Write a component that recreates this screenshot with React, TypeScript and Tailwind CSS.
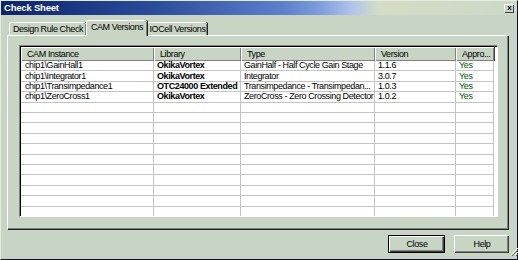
const rows: string[][] = [
  ['chip1\\GainHall1', 'OkikaVortex', 'GainHalf - Half Cycle Gain Stage', '1.1.6', 'Yes'],
  ['chip1\\Integrator1', 'OkikaVortex', 'Integrator', '3.0.7', 'Yes'],
  ['chip1\\Transimpedance1', 'OTC24000 Extended', 'Transimpedance - Transimpedan...', '1.0.3', 'Yes'],
  ['chip1\\ZeroCross1', 'OkikaVortex', 'ZeroCross - Zero Crossing Detector', '1.0.2', 'Yes'],
]

const headers = ['CAM Instance', 'Library', 'Type', 'Version', 'Appro...']

const font = { fontFamily: '"Liberation Sans", Arial, sans-serif' }

function HeaderCell({ label }: { label: string }) {
  return (
    <div className="h-[14px] flex items-center pl-[5px] bg-[#c8d4c4] border-t border-l border-white shadow-[inset_-1px_-1px_0_#808080,1px_0_0_#404040] text-black overflow-hidden whitespace-nowrap">
      {label}
    </div>
  )
}

function Tab({ label, active = false, w }: { label: string; active?: boolean; w: string }) {
  if (active) {
    return (
      <div className={`${w} h-[16px] relative z-10 -mb-px flex items-start justify-center pt-[2px] bg-[#c8d4c4] border-t border-l border-white rounded-tl-[2px] rounded-tr-[2px] shadow-[inset_-1px_0_0_#808080,1px_0_0_#202020]`}>
        {label}
      </div>
    )
  }
  return (
    <div className={`${w} h-[13px] flex items-center justify-center bg-[#c8d4c4] border-t border-l border-white rounded-tl-[2px] rounded-tr-[2px] shadow-[inset_-1px_0_0_#808080,1px_0_0_#202020]`}>
      {label}
    </div>
  )
}

function Button({ label, isDefault = false, w }: { label: string; isDefault?: boolean; w: string }) {
  return (
    <div className={`${w} h-[18px] ${isDefault ? 'border border-black' : ''}`}>
      <div className="h-full w-full flex items-center justify-center bg-[#c8d4c4] border-t border-l border-white shadow-[inset_-1px_-1px_0_#404040,inset_-2px_-2px_0_#808080] text-black">
        {label}
      </div>
    </div>
  )
}

export default function App() {
  const allRows = [...rows, ...Array.from({ length: 11 }, () => ['', '', '', '', ''])]

  return (
    <div
      className="w-[518px] h-[260px] bg-[#c8d4c4] border border-t-[#e4ece0] border-l-[#e4ece0] border-r-[#101030] border-b-[#101030] flex flex-col text-[9px] tracking-[-0.4px] text-black leading-none"
      style={font}
    >
      {/* title bar */}
      <div className="h-[14px] flex items-center justify-between pl-[3px] pr-[3px] bg-[linear-gradient(to_right,#0a246a_0%,#2c4c9c_30%,#5f80cc_55%,#7f9ede_62%,#b0c4ec_68%,#d4dcc4_73%,#ccd8c8_100%)]">
        <span className="text-white font-bold text-[9.5px] tracking-[-0.2px]">Check Sheet</span>
        <div className="w-[10px] h-[9px] flex items-center justify-center bg-[#c8d4c4] border-t border-l border-white shadow-[inset_-1px_-1px_0_#404040] text-[8px] font-bold leading-none tracking-normal pb-px">
          x
        </div>
      </div>

      {/* tabs */}
      <div className="mt-[4px] ml-[8px] h-[16px] flex items-end">
        <Tab label="Design Rule Check" w="w-[77px]" />
        <Tab label="CAM Versions" active w="w-[61px]" />
        <Tab label="IOCell Versions" w="w-[60px]" />
      </div>

      {/* tab panel */}
      <div className="ml-[6px] w-[501px] h-[194px] border-t border-l border-white shadow-[inset_-1px_-1px_0_#808080,1px_1px_0_#202020] pt-[9px] pl-[11px] pr-[9px]">
        <div className="w-[479px] h-[172px] border-t border-l border-[#808080] border-r border-b border-r-white border-b-white shadow-[inset_1px_1px_0_#000] bg-white pt-px pl-px overflow-hidden">
          <div className="grid grid-cols-[133px_87px_134px_81px_38px] w-[473px]">
            {headers.map((h) => (
              <HeaderCell key={h} label={h} />
            ))}
          </div>
          <div className="grid grid-cols-[133px_87px_134px_81px_38px] grid-rows-[repeat(15,1fr)] w-[473px] h-[156px]">
            {allRows.map((r, i) =>
              r.map((c, j) => (
                <div
                  key={`${i}-${j}`}
                  className={`flex items-center border-b border-r border-[#c4c4c4] overflow-hidden whitespace-nowrap ${
                    j === 0 ? 'pl-[4px]' : 'pl-[3px]'
                  } ${j === 1 ? 'font-bold' : ''} ${j === 4 ? 'text-[#005a00]' : 'text-black'}`}
                >
                  {c}
                </div>
              ))
            )}
          </div>
        </div>
      </div>

      {/* buttons */}
      <div className="mt-[6px] flex">
        <div className="ml-[387px]">
          <Button label="Close" isDefault w="w-[57px]" />
        </div>
        <div className="ml-[9px]">
          <Button label="Help" w="w-[55px]" />
        </div>
        <div className="flex-1 flex items-end justify-end">
          <svg width="12" height="12" viewBox="0 0 12 12" className="mt-[9px]">
            <path d="M11 2 L2 11 M11 6 L6 11 M11 10 L10 11" stroke="#ffffff" strokeWidth="1" />
            <path d="M12 3 L3 12 M12 7 L7 12" stroke="#606060" strokeWidth="1" />
          </svg>
        </div>
      </div>
    </div>
  )
}
